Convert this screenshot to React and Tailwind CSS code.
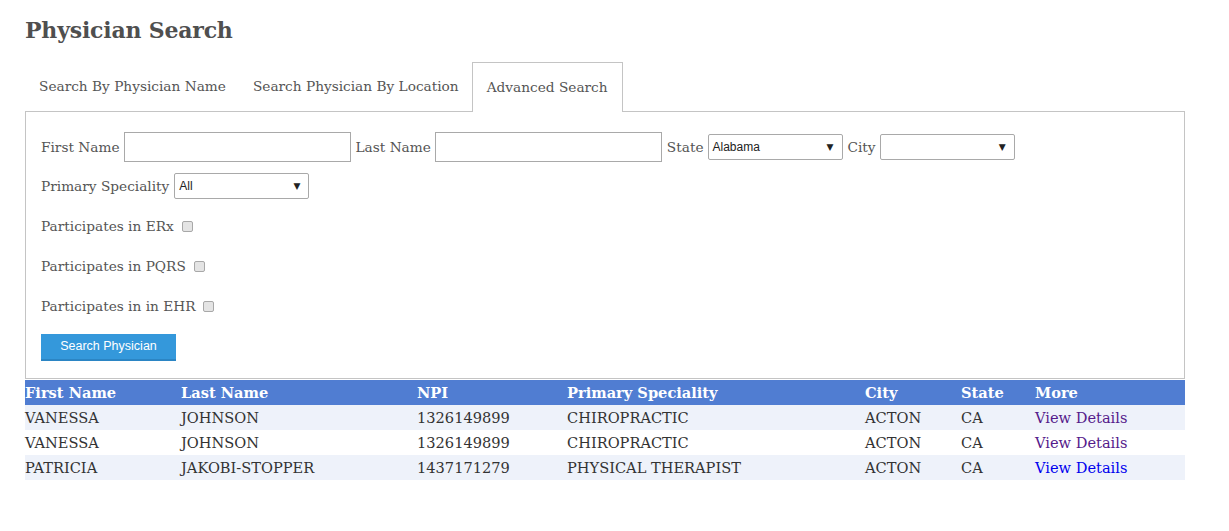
import React from "react";

const rows = [
  { first: "VANESSA", last: "JOHNSON", npi: "1326149899", spec: "CHIROPRACTIC", city: "ACTON", state: "CA", visited: true },
  { first: "VANESSA", last: "JOHNSON", npi: "1326149899", spec: "CHIROPRACTIC", city: "ACTON", state: "CA", visited: true },
  { first: "PATRICIA", last: "JAKOBI-STOPPER", npi: "1437171279", spec: "PHYSICAL THERAPIST", city: "ACTON", state: "CA", visited: false },
];

// fake native dropdown
const Dropdown = ({ value, width }) => (
  <div
    className={`${width} h-[26px] border border-[#a9a9a9] rounded-[2px] bg-white flex items-center justify-between pl-[4px] pr-[8px]`}
  >
    <span className="text-[12px] text-[#222] font-['Liberation_Sans',Arial,sans-serif]">{value}</span>
    <span className="text-[9px] text-[#222] leading-none">▼</span>
  </div>
);

const Check = ({ label }) => (
  <div className="flex items-center h-[20px]">
    <span>{label}</span>
    <span className="ml-[8px] w-[11px] h-[11px] rounded-[2px] border border-[#a8a8a8] bg-[#e4e4e4]" />
  </div>
);

const App = () => {
  return (
    <div className="min-h-screen bg-white px-[25px] pt-[14px] font-['DejaVu_Serif',Georgia,serif] text-[13.7px] text-[#555] w-[1160px] box-content">
      <h1 className="text-[22px] font-bold text-[#4f4f4f] leading-[30px] tracking-[-0.2px] mt-px">
        Physician Search
      </h1>

      {/* Tabs */}
      <div className="mt-[17px] flex h-[49px]">
        <div className="px-[14px] flex items-center">Search By Physician Name</div>
        <div className="px-[13px] flex items-center">Search Physician By Location</div>
        <div className="px-[14px] flex items-center border border-b-0 border-[#c4c4c4] bg-white relative z-10 -mb-px">
          Advanced Search
        </div>
      </div>

      {/* Search panel */}
      <div className="border border-[#c4c4c4] pl-[15px] pt-[20px] pb-[17px]">
        <div className="flex items-center h-[30px]">
          <span>First Name</span>
          <div className="ml-[4px] w-[227px] h-[30px] border border-[#a9a9a9] bg-white" />
          <span className="ml-[5px]">Last Name</span>
          <div className="ml-[4px] w-[227px] h-[30px] border border-[#a9a9a9] bg-white" />
          <span className="ml-[5px] mr-[4px]">State</span>
          <Dropdown value="Alabama" width="w-[135px]" />
          <span className="ml-[5px] mr-[4px]">City</span>
          <Dropdown value="" width="w-[135px]" />
        </div>
        <div className="flex items-center h-[26px] mt-[11px]">
          <span className="mr-[5px]">Primary Speciality</span>
          <Dropdown value="All" width="w-[135px]" />
        </div>
        <div className="mt-[17px]">
          <Check label="Participates in ERx" />
        </div>
        <div className="mt-[20px]">
          <Check label="Participates in PQRS" />
        </div>
        <div className="mt-[20px]">
          <Check label="Participates in in EHR" />
        </div>
        <button className="mt-[18px] w-[135px] h-[27px] bg-[#3498db] border-b-2 border-[#2b85c4] text-white text-[12.5px] font-['Liberation_Sans',Arial,sans-serif]">
          Search Physician
        </button>
      </div>

      {/* Results */}
      <table className="w-[1160px] border-collapse mt-px table-fixed text-[14.6px]">
        <colgroup>
          <col className="w-[156px]" />
          <col className="w-[236px]" />
          <col className="w-[150px]" />
          <col className="w-[298px]" />
          <col className="w-[96px]" />
          <col className="w-[74px]" />
          <col className="w-[150px]" />
        </colgroup>
        <thead>
          <tr className="bg-[#507dd2] text-white font-bold h-[25px] text-left">
            <th className="p-0">First Name</th>
            <th className="p-0">Last Name</th>
            <th className="p-0">NPI</th>
            <th className="p-0">Primary Speciality</th>
            <th className="p-0">City</th>
            <th className="p-0">State</th>
            <th className="p-0">More</th>
          </tr>
        </thead>
        <tbody className="text-[#333]">
          {rows.map((r, i) => (
            <tr key={i} className={`h-[25px] ${i % 2 === 0 ? "bg-[#eef2fa]" : "bg-white"}`}>
              <td className="p-0">{r.first}</td>
              <td className="p-0">{r.last}</td>
              <td className="p-0">{r.npi}</td>
              <td className="p-0">{r.spec}</td>
              <td className="p-0">{r.city}</td>
              <td className="p-0">{r.state}</td>
              <td className="p-0">
                <a href="#" className={r.visited ? "text-[#551a8b]" : "text-[#0000ee]"}>
                  View Details
                </a>
              </td>
            </tr>
          ))}
        </tbody>
      </table>
    </div>
  );
};

export default App;
